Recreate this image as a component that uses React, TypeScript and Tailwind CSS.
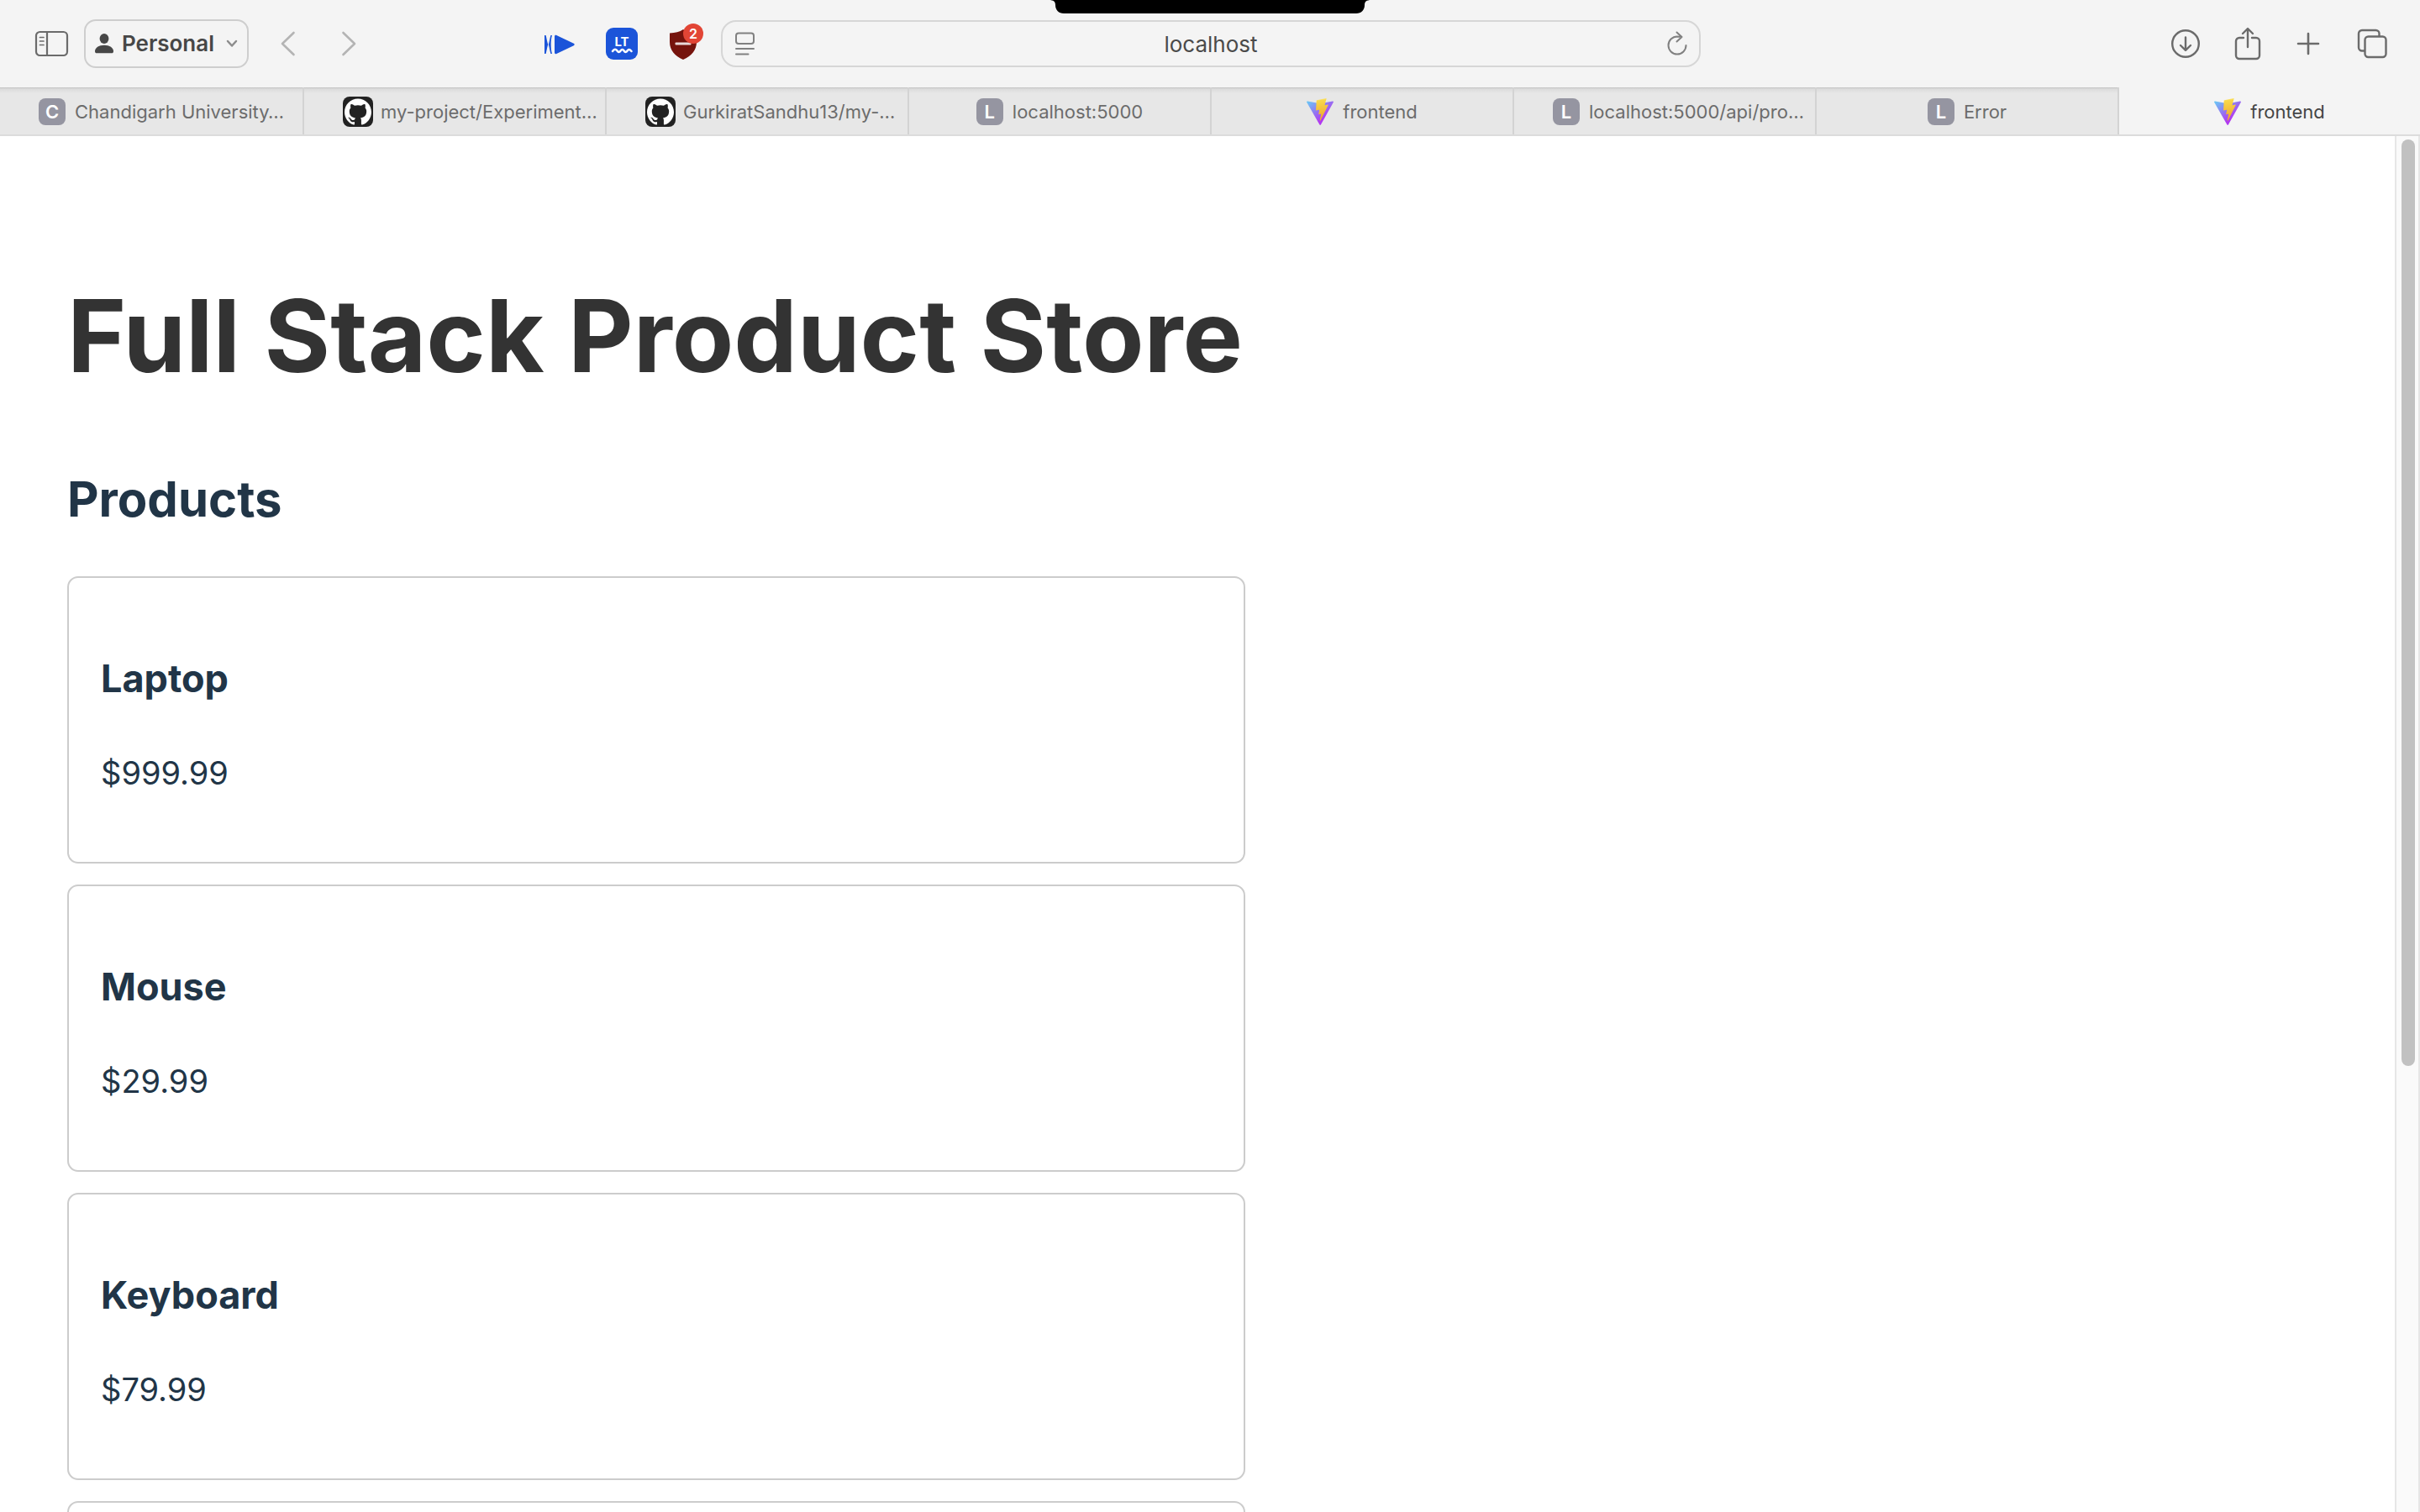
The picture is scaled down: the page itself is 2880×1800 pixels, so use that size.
import { useId } from "react";
import { SiGithub } from "react-icons/si";

type Tab = {
  title: string;
  icon: "letter" | "github" | "vite";
  letter?: string;
  long?: boolean;
  active?: boolean;
};

const tabs: Tab[] = [
  { title: "Chandigarh University…", icon: "letter", letter: "C", long: true },
  { title: "my-project/Experiment…", icon: "github", long: true },
  { title: "GurkiratSandhu13/my-…", icon: "github", long: true },
  { title: "localhost:5000", icon: "letter", letter: "L" },
  { title: "frontend", icon: "vite" },
  { title: "localhost:5000/api/pro…", icon: "letter", letter: "L", long: true },
  { title: "Error", icon: "letter", letter: "L" },
  { title: "frontend", icon: "vite", active: true },
];

const products = [
  { name: "Laptop", price: "$999.99" },
  { name: "Mouse", price: "$29.99" },
  { name: "Keyboard", price: "$79.99" },
];

function ViteLogo() {
  const id = useId();
  return (
    <svg viewBox="0 0 256 257" className="size-8 shrink-0" aria-hidden="true">
      <defs>
        <linearGradient id={`${id}a`} x1="-.828%" x2="57.636%" y1="7.652%" y2="78.411%">
          <stop offset="0%" stopColor="#6CC4F5" />
          <stop offset="100%" stopColor="#B13AF0" />
        </linearGradient>
        <linearGradient id={`${id}b`} x1="43.376%" x2="50.316%" y1="2.242%" y2="89.03%">
          <stop offset="0%" stopColor="#FBE67C" />
          <stop offset="8.333%" stopColor="#F8D84A" />
          <stop offset="100%" stopColor="#F0A830" />
        </linearGradient>
      </defs>
      <path
        fill={`url(#${id}a)`}
        d="M255.153 37.938L134.897 252.976c-2.483 4.44-8.862 4.466-11.382.048L.875 37.958c-2.746-4.814 1.371-10.646 6.827-9.67l120.385 21.517a6.537 6.537 0 0 0 2.322-.004l117.867-21.483c5.438-.991 9.574 4.796 6.877 9.62Z"
      />
      <path
        fill={`url(#${id}b)`}
        d="M185.432.063L96.44 17.501a3.268 3.268 0 0 0-2.634 3.014l-5.474 92.456a3.268 3.268 0 0 0 3.997 3.378l24.777-5.718c2.318-.535 4.413 1.507 3.936 3.838l-7.361 36.047c-.495 2.426 1.782 4.5 4.151 3.78l15.304-4.649c2.372-.72 4.652 1.36 4.15 3.788l-11.698 56.621c-.732 3.542 3.979 5.473 5.943 2.437l1.313-2.028l72.516-144.72c1.215-2.423-.88-5.186-3.54-4.672l-25.505 4.922c-2.396.462-4.435-1.77-3.759-4.114l16.646-57.705c.677-2.35-1.37-4.583-3.769-4.113Z"
      />
    </svg>
  );
}

function TabIcon({ tab }: { tab: Tab }) {
  if (tab.icon === "vite") return <ViteLogo />;
  if (tab.icon === "github") {
    return (
      <span className="-mr-[2px] flex size-9 shrink-0 items-center justify-center rounded-lg bg-[#222222] text-white">
        <SiGithub size={32} aria-hidden="true" />
      </span>
    );
  }
  return (
    <span className="flex size-8 shrink-0 items-center justify-center rounded-lg bg-[#9595a1] text-[22px] leading-8 font-semibold text-white">
      {tab.letter}
    </span>
  );
}

function TabBar() {
  return (
    <div role="tablist" className="grid h-[58px] shrink-0 grid-cols-8 border-b-2 border-[#dcdcdc]">
      {tabs.map((tab, i) => (
        <button
          key={i}
          type="button"
          role="tab"
          aria-selected={!!tab.active}
          className={`flex min-w-0 items-center gap-[11px] pt-[2px] text-[22px] leading-7 whitespace-nowrap ${
            tab.long ? "justify-start pl-[46px]" : "justify-center"
          } ${
            tab.active
              ? "bg-[#f4f4f4] text-[#454545]"
              : "bg-[linear-gradient(#c2c2c2,#dcdcdc_2px,#e7e7e7_7px)] text-[#6c6c6c]"
          } ${i > 0 ? "border-l-2 border-[#d3d3d3]" : ""}`}
        >
          <TabIcon tab={tab} />
          {tab.title}
        </button>
      ))}
    </div>
  );
}

function Toolbar() {
  return (
    <header className="relative flex h-[104px] shrink-0 items-center bg-[#f4f4f4] pb-px text-[#6b6b6b]">
      {/* Camera housing */}
      <svg viewBox="0 0 384 16" className="absolute top-0 left-1/2 h-4 w-96 -translate-x-1/2" aria-hidden="true">
        <path d="M0 0h384c-6 0-8 2-8 6 0 6-4 10-10 10H18C12 16 8 12 8 6 8 2 6 0 0 0z" fill="#000" />
      </svg>

      <div className="flex flex-1 items-center pl-10">
        <button type="button" aria-label="Show sidebar">
          <svg width="42" height="34" viewBox="0 0 42 34" fill="none" stroke="currentColor" strokeWidth="2.2" strokeLinecap="round">
            <rect x="3" y="3" width="37" height="28" rx="4.5" />
            <path d="M16 3v28" />
            <path d="M7.500 9.500h4.500M7.500 14h4.500M7.500 18.500h4.500" strokeWidth="1.700" />
          </svg>
        </button>
        <button
          type="button"
          className="ml-[18px] flex h-[58px] w-[196px] items-center justify-center rounded-[14px] border-2 border-[#cecece] text-[26px] font-semibold text-[#474747]"
        >
          <svg width="22" height="24" viewBox="0 0 22 24" fill="currentColor" aria-hidden="true">
            <ellipse cx="11" cy="6" rx="5.400" ry="6" />
            <path d="M0 21c0-4 4.500-7.200 11-7.200S22 17 22 21c0 1.500-.8 2.300-2.200 2.300H2.200C.8 23.300 0 22.500 0 21z" />
          </svg>
          <span className="ml-[10px]">Personal</span>
          <svg width="14" height="10" viewBox="0 0 14 10" fill="none" stroke="#8c8c8c" strokeWidth="2.500" strokeLinecap="round" strokeLinejoin="round" className="ml-[14px]" aria-hidden="true">
            <path d="M2 2l5 5.500L12 2" />
          </svg>
        </button>
        <button type="button" aria-label="Back" className="ml-9">
          <svg width="22" height="32" viewBox="0 0 22 32" fill="none" stroke="#b4b4b4" strokeWidth="2.600" strokeLinecap="round" strokeLinejoin="round">
            <path d="M17.500 3L4 16l13.500 13" />
          </svg>
        </button>
        <button type="button" aria-label="Forward" className="ml-[50px]">
          <svg width="22" height="32" viewBox="0 0 22 32" fill="none" stroke="#b4b4b4" strokeWidth="2.600" strokeLinecap="round" strokeLinejoin="round">
            <path d="M4.500 3L18 16 4.500 29" />
          </svg>
        </button>

        <div className="mr-7 ml-auto flex items-center">
          <button type="button" aria-label="Skip forward" className="pt-[3px]">
            <svg width="36" height="24" viewBox="0 0 36 24" fill="#1b54d9">
              <path d="M0 1h1.600c.9 3 1.300 7 2.600 11-1.300 4-1.700 8-2.600 11H0zM9 1H7.400C6.400 4 6 8 4.800 12c1.200 4 1.600 8 2.600 11H9c-1-3-1.300-7-1.300-11S8 4 9 1z" />
              <path d="M12 2.500C12 1 13 .6 14.300 1l20.500 9.800c1.200.600 1.200 1.800 0 2.400L14.300 23c-1.300.5-2.300 0-2.300-1.500z" />
            </svg>
          </button>
          <button type="button" aria-label="LanguageTool" className="ml-[37px]">
            <svg width="38" height="38" viewBox="0 0 38 38">
              <rect width="38" height="38" rx="9" fill="#1b54d9" />
              <text x="19" y="22" textAnchor="middle" fontFamily="Inter, sans-serif" fontWeight="700" fontSize="15" fill="#fff">
                LT
              </text>
              <path d="M8 28c2-3 4-3 6 0 1.500 1.500 2.500 1 3.500-.5 1.500-2 3-2 4.500.5 1.500 1.500 2.500 1 3.500-.5 1.500-2 3-2 5 .5" fill="none" stroke="#fff" strokeWidth="2.500" strokeLinecap="round" strokeLinejoin="round" />
            </svg>
          </button>
          <button type="button" aria-label="Content blocker, 2 blocked" className="relative ml-[37px] pt-[2px]">
            <svg width="34" height="38" viewBox="0 0 34 38">
              <path d="M17 1c4 3 9.500 4 16 4.500V16c0 10-6 16.500-16 21C7 32.500 1 26 1 16V5.500C7.500 5 13 4 17 1z" fill="#76140d" />
              <rect x="7.500" y="16.500" width="19" height="3" rx="1" fill="#e9dada" />
            </svg>
            <span className="absolute -top-1 -right-[7px] flex size-6 items-center justify-center rounded-full bg-[#e24535] text-[16px] leading-6 font-semibold text-white">
              2
            </span>
          </button>
        </div>
      </div>

      <div className="flex h-14 w-[1166px] items-center rounded-[18px] border-2 border-[#d6d6d6] px-[14px] text-[#808080]">
        <button type="button" aria-label="Page menu">
          <svg width="24" height="28" viewBox="0 0 24 28" fill="none" stroke="currentColor" strokeWidth="2" strokeLinecap="round">
            <rect x="2" y="1.500" width="21" height="12.500" rx="3" />
            <path d="M2 20h21M2 26.500h14.500" />
          </svg>
        </button>
        <input
          type="text"
          aria-label="Address"
          defaultValue="localhost"
          className="min-w-0 flex-1 bg-transparent pt-[2px] text-center text-[26px] leading-8 text-[#4a4a4a] outline-none"
        />
        <button type="button" aria-label="Reload">
          <svg width="24" height="30" viewBox="0 0 24 30" fill="none" stroke="currentColor" strokeWidth="2" strokeLinecap="round" strokeLinejoin="round">
            <path d="M22.500 17A10.500 10.500 0 1 1 12 6.500l5.500.5M11.500 1.500l6 5.500-6 5.500" />
          </svg>
        </button>
      </div>

      <div className="flex flex-1 items-center justify-end pr-[38px]">
        <button type="button" aria-label="Downloads">
          <svg width="36" height="36" viewBox="0 0 36 36" fill="none" stroke="currentColor" strokeWidth="2.400" strokeLinecap="round" strokeLinejoin="round">
            <circle cx="18" cy="18" r="15.800" />
            <path d="M18 10.500v15M12 20l6 5.800 6-5.800" />
          </svg>
        </button>
        <button type="button" aria-label="Share" className="ml-10">
          <svg width="32" height="40" viewBox="0 0 32 40" fill="none" stroke="currentColor" strokeWidth="2.400" strokeLinecap="round" strokeLinejoin="round">
            <path d="M11 13H6a4 4 0 0 0-4 4v17a4 4 0 0 0 4 4h20a4 4 0 0 0 4-4V17a4 4 0 0 0-4-4h-5" />
            <path d="M16 24V2.500M10 8l6-6 6 6" />
          </svg>
        </button>
        <button type="button" aria-label="New tab" className="ml-[42px]">
          <svg width="28" height="28" viewBox="0 0 28 28" fill="none" stroke="currentColor" strokeWidth="2.600" strokeLinecap="round">
            <path d="M14 2v24M2 14h24" />
          </svg>
        </button>
        <button type="button" aria-label="Tab overview" className="ml-[43px]">
          <svg width="38" height="36" viewBox="0 0 38 36" fill="none" stroke="currentColor" strokeWidth="2.400" strokeLinejoin="round">
            <rect x="10.500" y="9.500" width="25" height="24.500" rx="4" />
            <path d="M10.500 26.500H7a4 4 0 0 1-4-4V6a4 4 0 0 1 4-4h16.500a4 4 0 0 1 4 4v3.500" />
          </svg>
        </button>
      </div>
    </header>
  );
}

export default function App() {
  return (
    <div className="flex h-screen flex-col overflow-hidden bg-white font-[Inter,sans-serif]">
      <Toolbar />
      <TabBar />
      <div className="flex min-h-0 flex-1">
        <main className="min-w-0 flex-1 overflow-hidden px-20 pt-[168px] text-[#213547]">
          <div className="max-w-[1402px]">
            <h1 className="text-[120px] leading-[140px] font-bold whitespace-nowrap text-[#333333]">
              Full Stack Product Store
            </h1>
            <section>
              <h2 className="mt-[79px] text-[58px] leading-[90px] font-bold">Products</h2>
              <ul className="mt-[47px] flex flex-col gap-[25px]">
                {products.map((product) => (
                  <li key={product.name} className="rounded-[13px] border-2 border-[#cccccc] px-[38px] pt-[85px] pb-[76px]">
                    <h3 className="text-[45px] leading-[70px] font-bold">{product.name}</h3>
                    <p className="mt-[47px] text-[38px] leading-[60px]">{product.price}</p>
                  </li>
                ))}
                <li className="h-[342px] rounded-[13px] border-2 border-[#cccccc]" />
              </ul>
            </section>
          </div>
        </main>
        <div className="w-[30px] shrink-0 border-x-2 border-[#e6e6e6] bg-[#fafafa] px-[6px] pt-1">
          <div className="h-[67.5%] w-4 rounded-full bg-[#c1c1c1]" />
        </div>
      </div>
    </div>
  );
}
